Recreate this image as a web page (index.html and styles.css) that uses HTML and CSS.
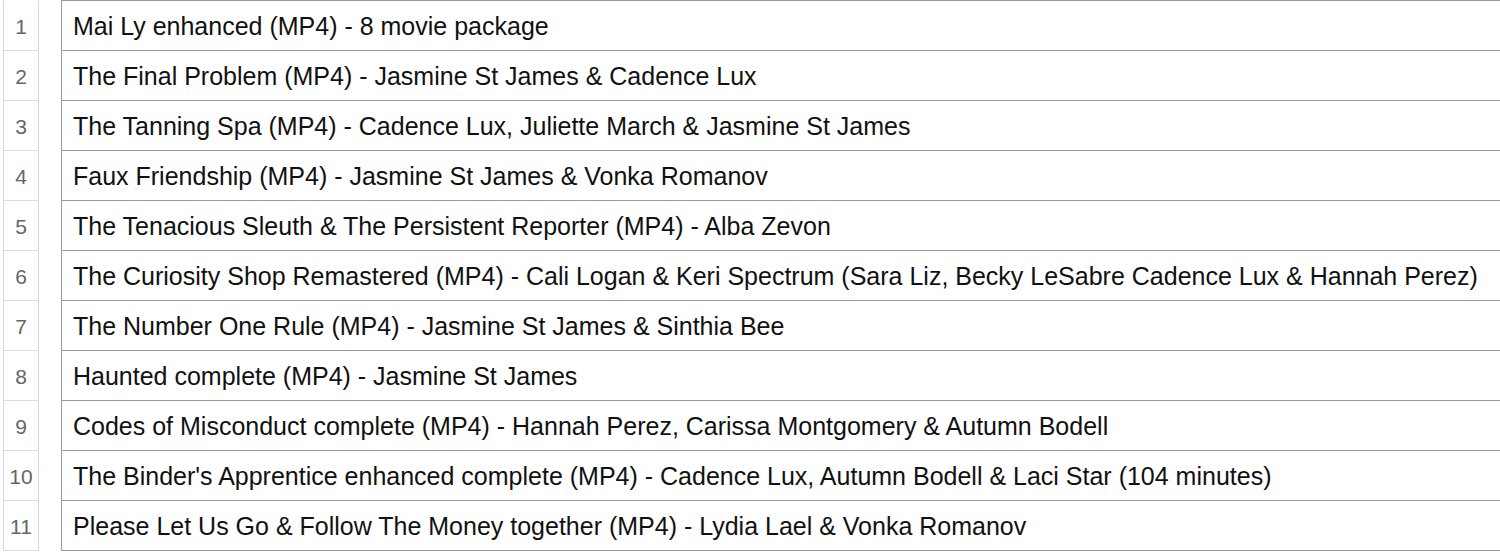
FILE: index.html
```html
<!DOCTYPE html>
<html>
<head>
<meta charset="utf-8">
<link rel="stylesheet" href="styles.css">
</head>
<body>
<div class="sheet">
  <div class="row first"><div class="num">1</div><div class="gap"></div><div class="cell">Mai Ly enhanced (MP4) - 8 movie package</div></div>
  <div class="row"><div class="num">2</div><div class="gap"></div><div class="cell">The Final Problem (MP4) - Jasmine St James &amp; Cadence Lux</div></div>
  <div class="row"><div class="num">3</div><div class="gap"></div><div class="cell">The Tanning Spa (MP4) - Cadence Lux, Juliette March &amp; Jasmine St James</div></div>
  <div class="row"><div class="num">4</div><div class="gap"></div><div class="cell">Faux Friendship (MP4) - Jasmine St James &amp; Vonka Romanov</div></div>
  <div class="row"><div class="num">5</div><div class="gap"></div><div class="cell">The Tenacious Sleuth &amp; The Persistent Reporter (MP4) - Alba Zevon</div></div>
  <div class="row"><div class="num">6</div><div class="gap"></div><div class="cell">The Curiosity Shop Remastered (MP4) - Cali Logan &amp; Keri Spectrum (Sara Liz, Becky LeSabre Cadence Lux &amp; Hannah Perez)</div></div>
  <div class="row"><div class="num">7</div><div class="gap"></div><div class="cell">The Number One Rule (MP4) - Jasmine St James &amp; Sinthia Bee</div></div>
  <div class="row"><div class="num">8</div><div class="gap"></div><div class="cell">Haunted complete (MP4) - Jasmine St James</div></div>
  <div class="row"><div class="num">9</div><div class="gap"></div><div class="cell">Codes of Misconduct complete (MP4) - Hannah Perez, Carissa Montgomery &amp; Autumn Bodell</div></div>
  <div class="row"><div class="num">10</div><div class="gap"></div><div class="cell">The Binder's Apprentice enhanced complete (MP4) - Cadence Lux, Autumn Bodell &amp; Laci Star (104 minutes)</div></div>
  <div class="row"><div class="num">11</div><div class="gap"></div><div class="cell">Please Let Us Go &amp; Follow The Money together (MP4) - Lydia Lael &amp; Vonka Romanov</div></div>
</div>
</body>
</html>
```
FILE: styles.css
```css
html, body {
  margin: 0;
  padding: 0;
  background: #ffffff;
}
body {
  font-family: "Liberation Sans", Arial, sans-serif;
  overflow: hidden;
}
.sheet {
  display: flex;
  flex-direction: column;
  padding-left: 3px;
}
.row {
  display: flex;
  height: 50px;
}
.row.first {
  height: 51px;
}
.num {
  width: 36px;
  flex: none;
  box-sizing: border-box;
  border-left: 1px solid #d8d8d8;
  border-right: 1px solid #d8d8d8;
  border-bottom: 1px solid #dcdcdc;
  display: flex;
  align-items: center;
  justify-content: center;
  font-size: 21px;
  color: #666666;
  padding-top: 2px;
}
.row.first .num {
  border-top: 1px solid transparent;
}
.gap {
  width: 22px;
  flex: none;
}
.cell {
  flex: 1;
  border-left: 1px solid #999999;
  border-bottom: 1px solid #999999;
  padding-left: 11px;
  padding-top: 2px;
  display: flex;
  align-items: center;
  font-size: 25px;
  color: #111111;
  white-space: nowrap;
}
.row.first .cell {
  border-top: 1px solid #999999;
}
```
